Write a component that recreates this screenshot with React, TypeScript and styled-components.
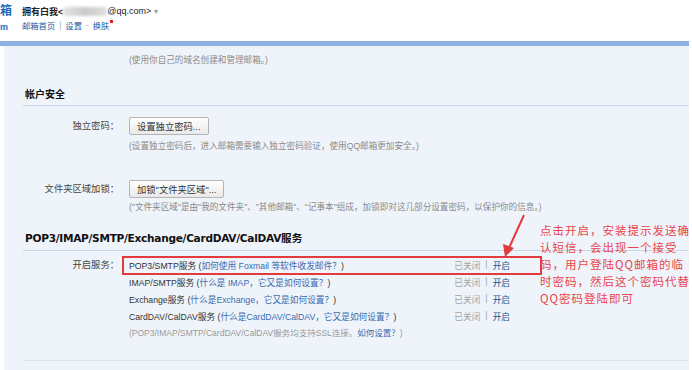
import React from 'react';
import styled, { createGlobalStyle } from 'styled-components';

const GlobalStyle = createGlobalStyle`
  body {
    margin: 0;
    background: #fff;
    font-family: 'Liberation Sans', 'Noto Sans CJK SC', sans-serif;
    font-size: 9px;
    color: #333;
  }
`;

const Page = styled.div`
  position: relative;
  width: 692px;
  height: 370px;
  overflow: hidden;
  display: flex;
  flex-direction: column;
`;

const Header = styled.div`
  height: 41px;
  display: flex;
  align-items: flex-start;
`;

const LogoClip = styled.div`
  width: 12px;
  overflow: hidden;
  display: flex;
  flex-direction: column;
  color: #1b6dc1;
  font-weight: bold;
  padding-top: 4px;

  .big {
    font-size: 12px;
    line-height: 14px;
  }
  .small {
    font-size: 9px;
    line-height: 12px;
    margin-top: 3px;
  }
`;

const Account = styled.div`
  margin-left: 10px;
  padding-top: 5px;
  display: flex;
  flex-direction: column;
  gap: 2px;
`;

const NameLine = styled.div`
  display: flex;
  align-items: center;
  height: 12px;
  font-size: 9px;
  color: #222;

  b {
    font-weight: bold;
  }
`;

const Blurred = styled.span`
  display: inline-block;
  width: 44px;
  height: 9px;
  border-radius: 4px;
  background: linear-gradient(90deg, #e4e4e4, #c9c9c9 50%, #dedede);
  filter: blur(1.5px);
`;

const Caret = styled.span`
  color: #999;
  font-size: 8px;
  margin-left: 3px;
`;

const LinksLine = styled.div`
  display: flex;
  align-items: center;
  gap: 4px;
  height: 12px;
  font-size: 8.3px;
  color: #1d5b9f;

  .sep {
    color: #aaa;
  }
`;

const RedDot = styled.span`
  width: 3px;
  height: 3px;
  background: #e02020;
  align-self: flex-start;
  margin-left: -3px;
  margin-top: 1px;
`;

const Bar = styled.div`
  height: 5px;
  margin-right: 3px;
  background: #8fb0e2;
`;

const Panel = styled.div`
  flex: 1;
  margin: 0 3px 0 4px;
  padding: 8px 0 0 19px;
  background: #eff4fb;
`;

const Row = styled.div<{ $gap?: number; $mt?: number }>`
  display: grid;
  grid-template-columns: 96px 1fr;
  column-gap: ${(p) => p.$gap ?? 10}px;
  margin-top: ${(p) => p.$mt ?? 0}px;
`;

const Label = styled.div<{ $h?: number }>`
  text-align: right;
  font-size: 9.3px;
  color: #444;
  line-height: ${(p) => p.$h ?? 18}px;
`;

const Content = styled.div`
  display: flex;
  flex-direction: column;
  align-items: flex-start;
`;

const Desc = styled.div<{ $mt?: number }>`
  font-size: 8.6px;
  line-height: 12px;
  color: #8a8a8a;
  margin-top: ${(p) => p.$mt ?? 0}px;
`;

const Heading = styled.div<{ $mt: number; $size: number; $pb: number }>`
  margin-top: ${(p) => p.$mt}px;
  font-weight: bold;
  font-size: ${(p) => p.$size}px;
  line-height: 14px;
  color: #111;
  padding: 0 0 ${(p) => p.$pb}px 2px;
  border-bottom: 1px solid #c6d5ea;
`;

const HeadingLatin = styled.span`
  font-family: 'DejaVu Sans', 'Noto Sans CJK SC', sans-serif;
  letter-spacing: -0.3px;
`;

const Button = styled.button`
  height: 18px;
  padding: 0 7px;
  border: 1px solid #b4b4b4;
  border-radius: 2px;
  background: linear-gradient(#ffffff, #e9e9e9);
  font-family: inherit;
  font-size: 9.3px;
  color: #333;
  cursor: pointer;
`;

const ServiceList = styled.div`
  display: flex;
  flex-direction: column;
  width: 418px;
`;

const ServiceRow = styled.div<{ $highlight?: boolean }>`
  display: grid;
  grid-template-columns: 1fr auto;
  height: 17px;
  align-items: center;
  padding: 0 31px 0 6px;
  font-size: 8.7px;
  color: #333;
  outline: ${(p) => (p.$highlight ? '2px solid #e23b3d' : 'none')};
  outline-offset: -1px;
`;

const Link = styled.span`
  color: #3a6bb0;
`;

const Status = styled.div`
  color: #a4a4a4;
  display: flex;
  gap: 5px;

  .on {
    color: #234f8c;
  }
`;

const Note = styled.div`
  height: 17px;
  line-height: 17px;
  padding-left: 6px;
  font-size: 8.5px;
  color: #9a9a9a;
`;

const BottomLine = styled.div`
  margin-top: 18px;
  border-top: 1px solid #dce4ef;
`;

const Annotation = styled.div`
  position: absolute;
  left: 540px;
  top: 222px;
  color: #ea434a;
  font-family: 'Noto Sans CJK SC', sans-serif;
  font-size: 11.5px;
  letter-spacing: 1px;
  line-height: 17px;
  white-space: nowrap;
`;

const Arrow = styled.svg`
  position: absolute;
  left: 495px;
  top: 210px;
`;

const services = [
  { name: 'POP3/SMTP服务', help: '如何使用 Foxmail 等软件收发邮件？', highlight: true },
  { name: 'IMAP/SMTP服务', help: '什么是 IMAP，它又是如何设置？' },
  { name: 'Exchange服务', help: '什么是Exchange，它又是如何设置？' },
  { name: 'CardDAV/CalDAV服务', help: '什么是CardDAV/CalDAV，它又是如何设置？' },
];

const noteLines = [
  '点击开启，安装提示发送确',
  '认短信，会出现一个接受',
  '码，用户登陆QQ邮箱的临',
  '时密码，然后这个密码代替',
  'QQ密码登陆即可',
];

export default function App() {
  return (
    <Page>
      <GlobalStyle />
      <Header>
        <LogoClip>
          <span className='big'>箱</span>
          <span className='small'>m</span>
        </LogoClip>
        <Account>
          <NameLine>
            <b>拥有白我&lt;</b>
            <Blurred />
            <span>@qq.com&gt;</span>
            <Caret>▾</Caret>
          </NameLine>
          <LinksLine>
            <span>邮箱首页</span>
            <span className='sep'>|</span>
            <span>设置</span>
            <span className='sep'>-</span>
            <span>换肤</span>
            <RedDot />
          </LinksLine>
        </Account>
      </Header>
      <Bar />
      <Panel>
        <Row>
          <div />
          <Desc>(使用你自己的域名创建和管理邮箱。)</Desc>
        </Row>

        <Heading $mt={22} $size={10} $pb={3}>帐户安全</Heading>

        <Row $mt={11}>
          <Label>独立密码：</Label>
          <Content>
            <Button>设置独立密码...</Button>
            <Desc $mt={5}>
              (设置独立密码后，进入邮箱需要输入独立密码验证，使用QQ邮箱更加安全。)
            </Desc>
          </Content>
        </Row>

        <Row $mt={28}>
          <Label>文件夹区域加锁：</Label>
          <Content>
            <Button>加锁"文件夹区域"...</Button>
            <Desc $mt={3}>
              ("文件夹区域"是由"我的文件夹"、"其他邮箱"、"记事本"组成，加锁即对这几部分设置密码，以保护你的信息。)
            </Desc>
          </Content>
        </Row>

        <Heading $mt={18} $size={10.6} $pb={5}>
          <HeadingLatin>POP3/IMAP/SMTP/Exchange/CardDAV/CalDAV</HeadingLatin>服务
        </Heading>

        <Row $mt={6} $gap={4}>
          <Label $h={17}>开启服务：</Label>
          <ServiceList>
            {services.map((s) => (
              <ServiceRow key={s.name} $highlight={s.highlight}>
                <span>
                  {s.name} (<Link>{s.help}</Link>)
                </span>
                <Status>
                  <span>已关闭</span>
                  <span>|</span>
                  <span className='on'>开启</span>
                </Status>
              </ServiceRow>
            ))}
            <Note>
              (POP3/IMAP/SMTP/CardDAV/CalDAV服务均支持SSL连接。<Link>如何设置？</Link>)
            </Note>
          </ServiceList>
        </Row>

        <BottomLine />
      </Panel>

      <Arrow width='40' height='55' viewBox='0 0 40 55'>
        <line x1='29' y1='5' x2='14' y2='38' stroke='#e23b3d' strokeWidth='2' />
        <polygon points='10,47 8,34 19,38' fill='#e23b3d' />
      </Arrow>
      <Annotation>
        {noteLines.map((l) => (
          <div key={l}>{l}</div>
        ))}
      </Annotation>
    </Page>
  );
}
